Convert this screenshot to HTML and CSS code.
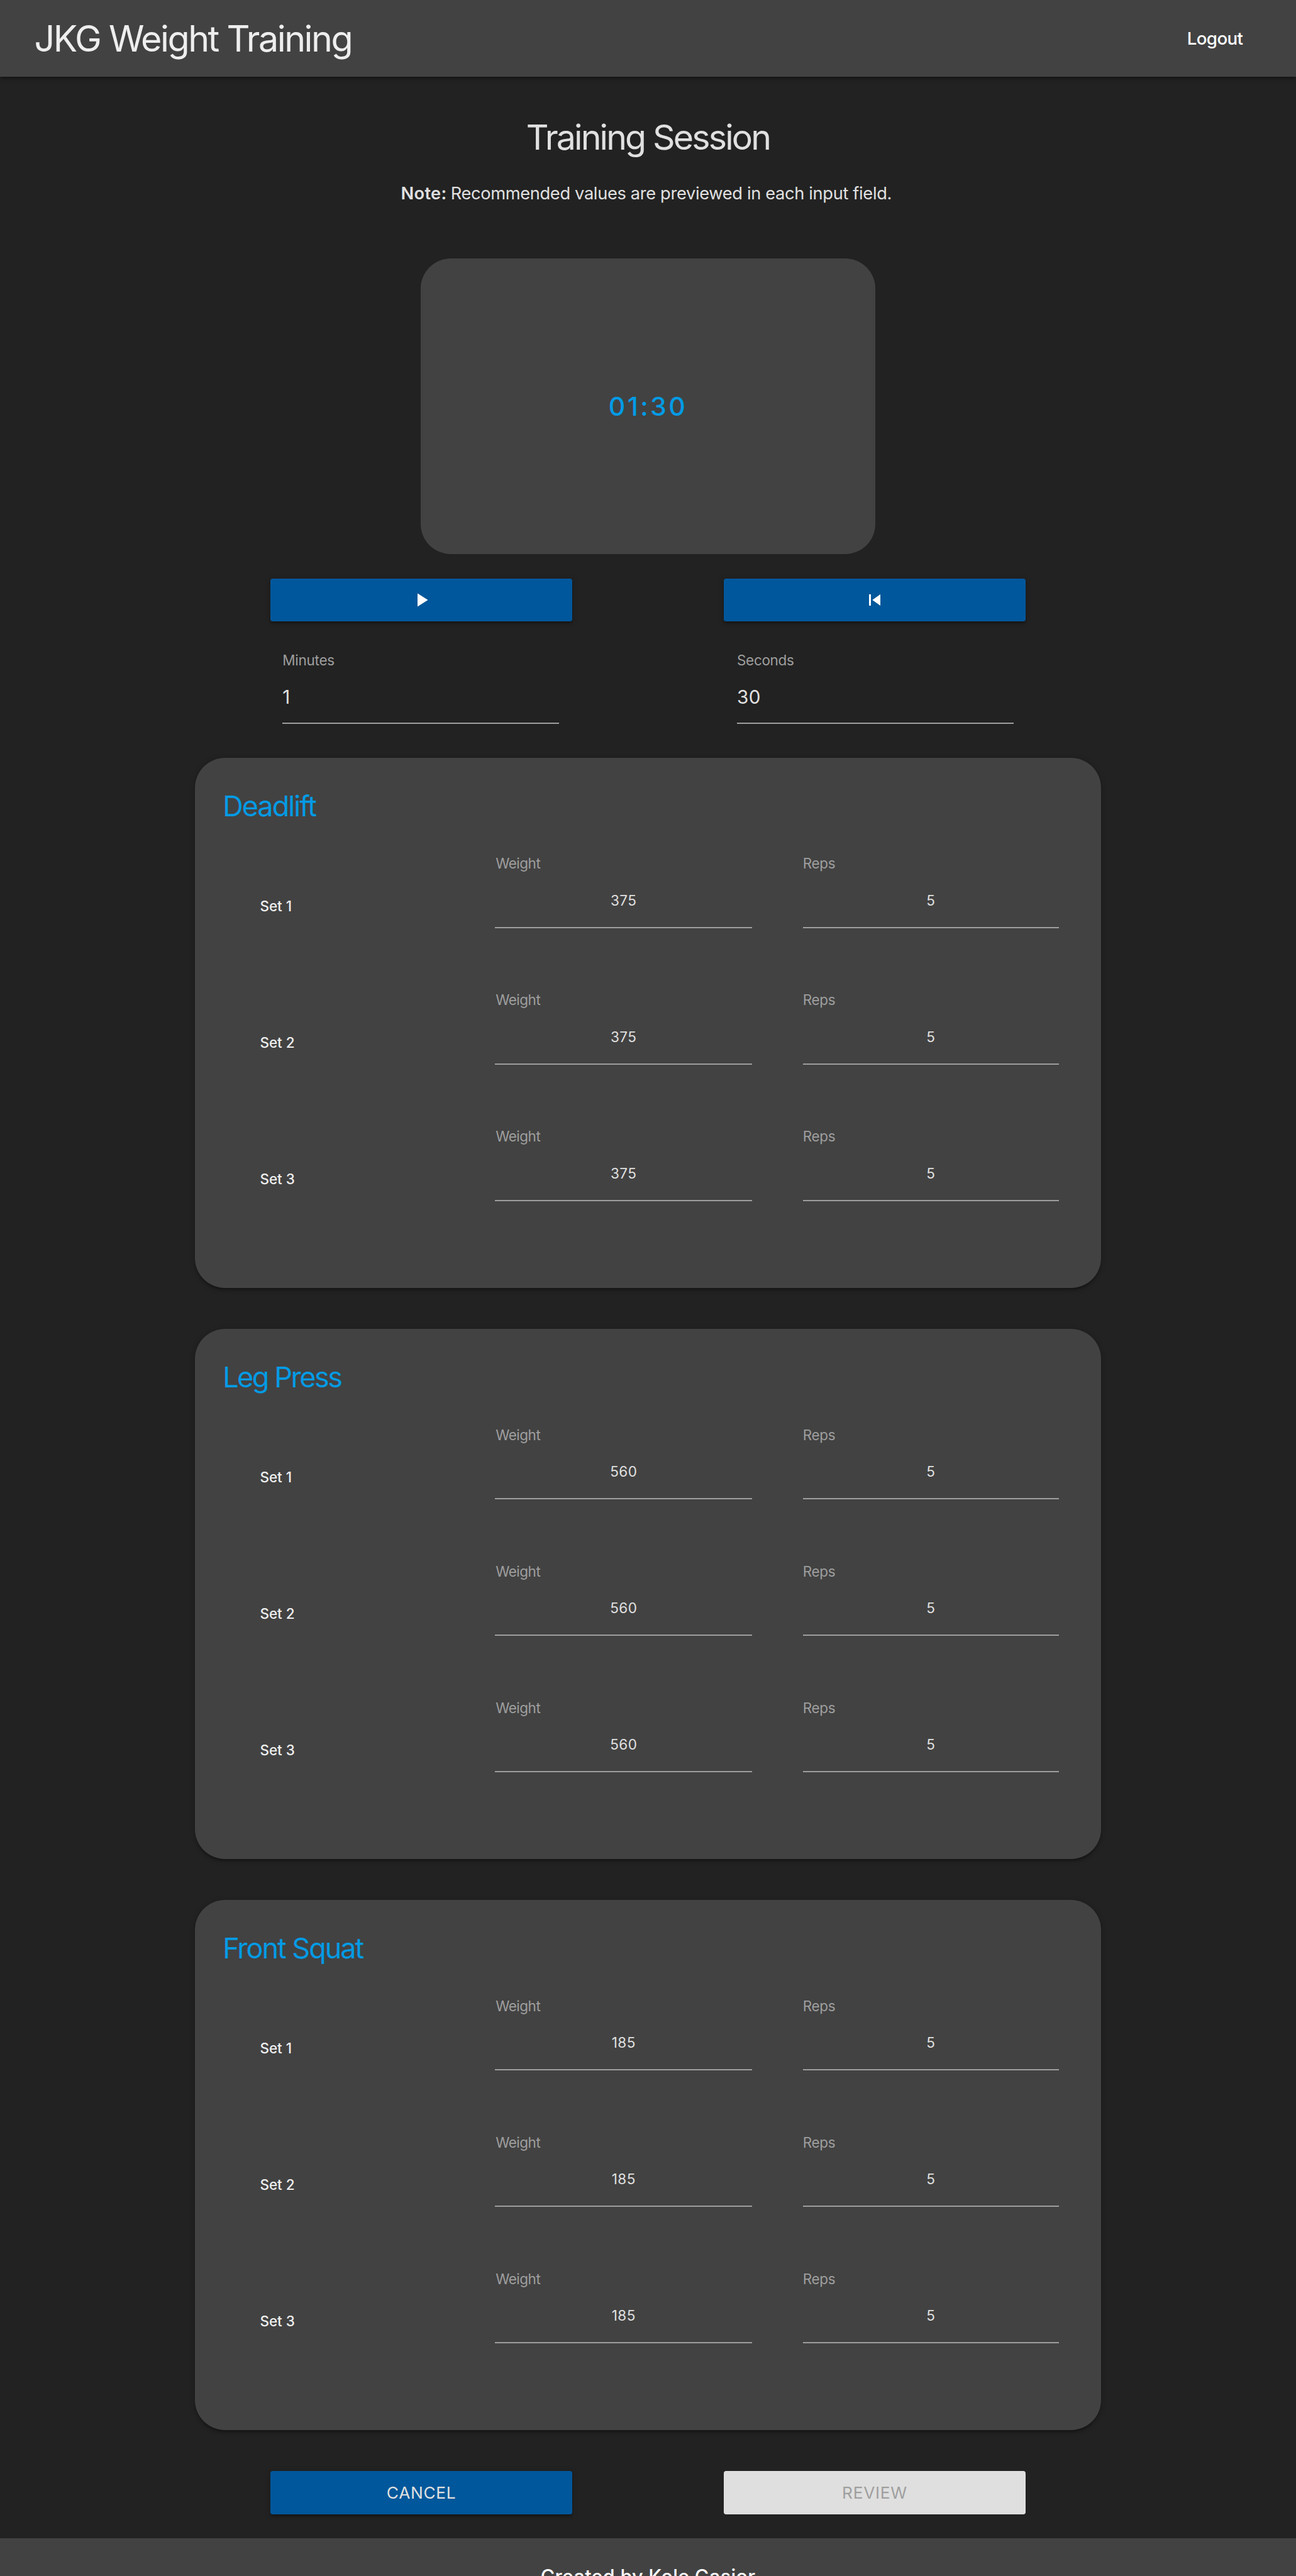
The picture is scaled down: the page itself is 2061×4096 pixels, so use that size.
FILE: index.html
```html
<!DOCTYPE html>
<html lang="en">
<head>
<meta charset="utf-8">
<title>JKG Weight Training</title>
<link rel="stylesheet" href="styles.css">
</head>
<body>
<header class="nav">
  <span class="brand">JKG Weight Training</span>
  <a class="logout">Logout</a>
</header>
<main class="page">
  <h1 class="title">Training Session</h1>
  <p class="note"><b class="note-label">Note:</b> <span class="note-text">Recommended values are previewed in each input field.</span></p>
  <section class="timer"><span class="clock">01:30</span></section>
  <div class="pair controls">
    <div class="btn"><svg class="icon" viewBox="0 0 24 24"><path d="M8 5v14l11-7z"/></svg></div>
    <div class="btn"><svg class="icon" viewBox="0 0 24 24"><path d="M6 6h2v12H6zm3.5 6l8.5 6V6z"/></svg></div>
  </div>
  <div class="pair times">
    <div class="field time"><span class="label">Minutes</span><span class="value">1</span></div>
    <div class="field time"><span class="label seconds">Seconds</span><span class="value">30</span></div>
  </div>
  <section class="card">
    <h2 class="lift deadlift">Deadlift</h2>
    <div class="row"><span class="set">Set 1</span><div class="field"><span class="label weight">Weight</span><span class="value">375</span></div><div class="field"><span class="label">Reps</span><span class="value">5</span></div></div>
    <div class="row"><span class="set">Set 2</span><div class="field"><span class="label weight">Weight</span><span class="value">375</span></div><div class="field"><span class="label">Reps</span><span class="value">5</span></div></div>
    <div class="row"><span class="set">Set 3</span><div class="field"><span class="label weight">Weight</span><span class="value">375</span></div><div class="field"><span class="label">Reps</span><span class="value">5</span></div></div>
  </section>
  <section class="card">
    <h2 class="lift leg-press">Leg Press</h2>
    <div class="row"><span class="set">Set 1</span><div class="field"><span class="label weight">Weight</span><span class="value">560</span></div><div class="field"><span class="label">Reps</span><span class="value">5</span></div></div>
    <div class="row"><span class="set">Set 2</span><div class="field"><span class="label weight">Weight</span><span class="value">560</span></div><div class="field"><span class="label">Reps</span><span class="value">5</span></div></div>
    <div class="row"><span class="set">Set 3</span><div class="field"><span class="label weight">Weight</span><span class="value">560</span></div><div class="field"><span class="label">Reps</span><span class="value">5</span></div></div>
  </section>
  <section class="card">
    <h2 class="lift front-squat">Front Squat</h2>
    <div class="row"><span class="set">Set 1</span><div class="field"><span class="label weight">Weight</span><span class="value">185</span></div><div class="field"><span class="label">Reps</span><span class="value">5</span></div></div>
    <div class="row"><span class="set">Set 2</span><div class="field"><span class="label weight">Weight</span><span class="value">185</span></div><div class="field"><span class="label">Reps</span><span class="value">5</span></div></div>
    <div class="row"><span class="set">Set 3</span><div class="field"><span class="label weight">Weight</span><span class="value">185</span></div><div class="field"><span class="label">Reps</span><span class="value">5</span></div></div>
  </section>
  <div class="pair actions">
    <div class="btn">CANCEL</div>
    <div class="btn disabled">REVIEW</div>
  </div>
</main>
<footer class="footer">Created by Kole Gasior</footer>
</body>
</html>
```

FILE: styles.css
```css
/* 1rem = 10 design pixels */
html {
  font-size: 9.56px;
}

* {
  box-sizing: border-box;
}

body {
  margin: 0;
  height: 4096px;
  overflow: hidden;
  display: flex;
  flex-direction: column;
  background: #222222;
  color: #e0e0e0;
  font-family: Inter, "Liberation Sans", sans-serif;
  font-weight: 430;
  --shadow: 0 0.4rem 0.4rem 0 rgba(0, 0, 0, 0.14), 0 0.6rem 0.2rem -0.4rem rgba(0, 0, 0, 0.12), 0 0.2rem 1rem 0 rgba(0, 0, 0, 0.2);
}

h1, h2, p {
  margin: 0;
  font-weight: 430;
}

.nav {
  flex: none;
  height: 12.8rem;
  padding: 0 8.85rem 0 5.7rem;
  display: flex;
  align-items: center;
  justify-content: space-between;
  background: #424242;
  box-shadow: var(--shadow);
}

.brand {
  font-size: 6rem;
  letter-spacing: -0.258rem;
  color: #eeeeee;
}

.logout {
  font-size: 2.9rem;
  font-weight: 500;
  letter-spacing: -0.065rem;
  color: #ffffff;
}

.page {
  flex: none;
  display: flex;
  flex-direction: column;
  align-items: center;
}

.title {
  margin-top: 6.72rem;
  font-size: 5.8rem;
  line-height: 6.4rem;
  letter-spacing: -0.295rem;
}

.note {
  width: 82.2rem;
  margin-top: 4.35rem;
  display: flex;
  gap: 0.65rem;
  font-size: 2.85rem;
  line-height: 4rem;
  white-space: nowrap;
}

.note-label {
  font-weight: 600;
  letter-spacing: 0.03rem;
}

.note-text {
  letter-spacing: -0.035rem;
}

.timer {
  width: 75.6rem;
  height: 49.2rem;
  margin-top: 8.73rem;
  display: flex;
  align-items: center;
  justify-content: center;
  border-radius: 5rem;
  background: #424242;
}

.clock {
  font-size: 4.3rem;
  font-weight: 480;
  letter-spacing: 0.36rem;
  color: #039be5;
}

.pair {
  width: 125.6rem;
  display: flex;
  justify-content: space-between;
}

.controls {
  margin-top: 4rem;
}

.btn {
  width: 50.2rem;
  height: 7.2rem;
  display: flex;
  align-items: center;
  justify-content: center;
  border-radius: 0.4rem;
  background: #01579b;
  box-shadow: var(--shadow);
  font-size: 2.75rem;
  letter-spacing: 0.07rem;
}

.disabled {
  background: #dfdfdf;
  box-shadow: none;
  color: #9f9f9f;
}

.icon {
  width: 3.77rem;
  height: 3.77rem;
  margin-bottom: 0.1rem;
  fill: #ffffff;
}

.times {
  margin-top: 4.97rem;
  padding: 0 2rem 0 2rem;
}

.field {
  display: flex;
  flex-direction: column;
}

.label {
  font-size: 2.35rem;
  line-height: 3rem;
  letter-spacing: -0.025rem;
  color: #9e9e9e;
}

.seconds {
  letter-spacing: -0.032rem;
}

.weight {
  padding-left: 0.1rem;
  letter-spacing: -0.047rem;
}

.value {
  height: 9.15rem;
  padding-top: 2.61rem;
  border-bottom: 2px solid #9e9e9e;
  font-size: 2.35rem;
  line-height: 4rem;
  letter-spacing: 0.05rem;
  text-align: center;
}

.time {
  width: 46rem;
}

.time .value {
  height: 9.05rem;
  padding-top: 2.58rem;
  font-size: 3.1rem;
  letter-spacing: 0.05rem;
  text-align: left;
}

.card {
  width: 150.8rem;
  height: 88.2rem;
  margin-top: 6.8rem;
  padding-top: 5.05rem;
  border-radius: 5rem;
  background: #424242;
  box-shadow: var(--shadow);
}

.times + .card {
  margin-top: 5.6rem;
}

.lift {
  margin: 0 0 5.13rem 4.65rem;
  font-size: 4.7rem;
  font-weight: 400;
  line-height: 6rem;
  letter-spacing: -0.2rem;
  color: #039be5;
}

.leg-press {
  letter-spacing: -0.255rem;
}

.front-squat {
  letter-spacing: -0.209rem;
}

.row {
  height: 22.7rem;
  padding-left: 10.85rem;
  display: grid;
  grid-template-columns: 39.1rem 42.8rem 42.6rem;
  column-gap: 0;
  align-items: start;
}

.row .field:last-child {
  margin-left: 8.4rem;
  margin-right: -8.4rem;
}

.set {
  padding-top: 7.05rem;
  font-size: 2.35rem;
  font-weight: 500;
  line-height: 3rem;
  color: #eeeeee;
}

.actions {
  margin-top: 6.8rem;
}

.footer {
  flex: none;
  height: 20rem;
  margin-top: 4rem;
  padding-top: 4.4rem;
  background: #424242;
  color: #ffffff;
  font-size: 3.2rem;
  font-weight: 460;
  line-height: 4rem;
  letter-spacing: 0.03rem;
  text-align: center;
}
```
